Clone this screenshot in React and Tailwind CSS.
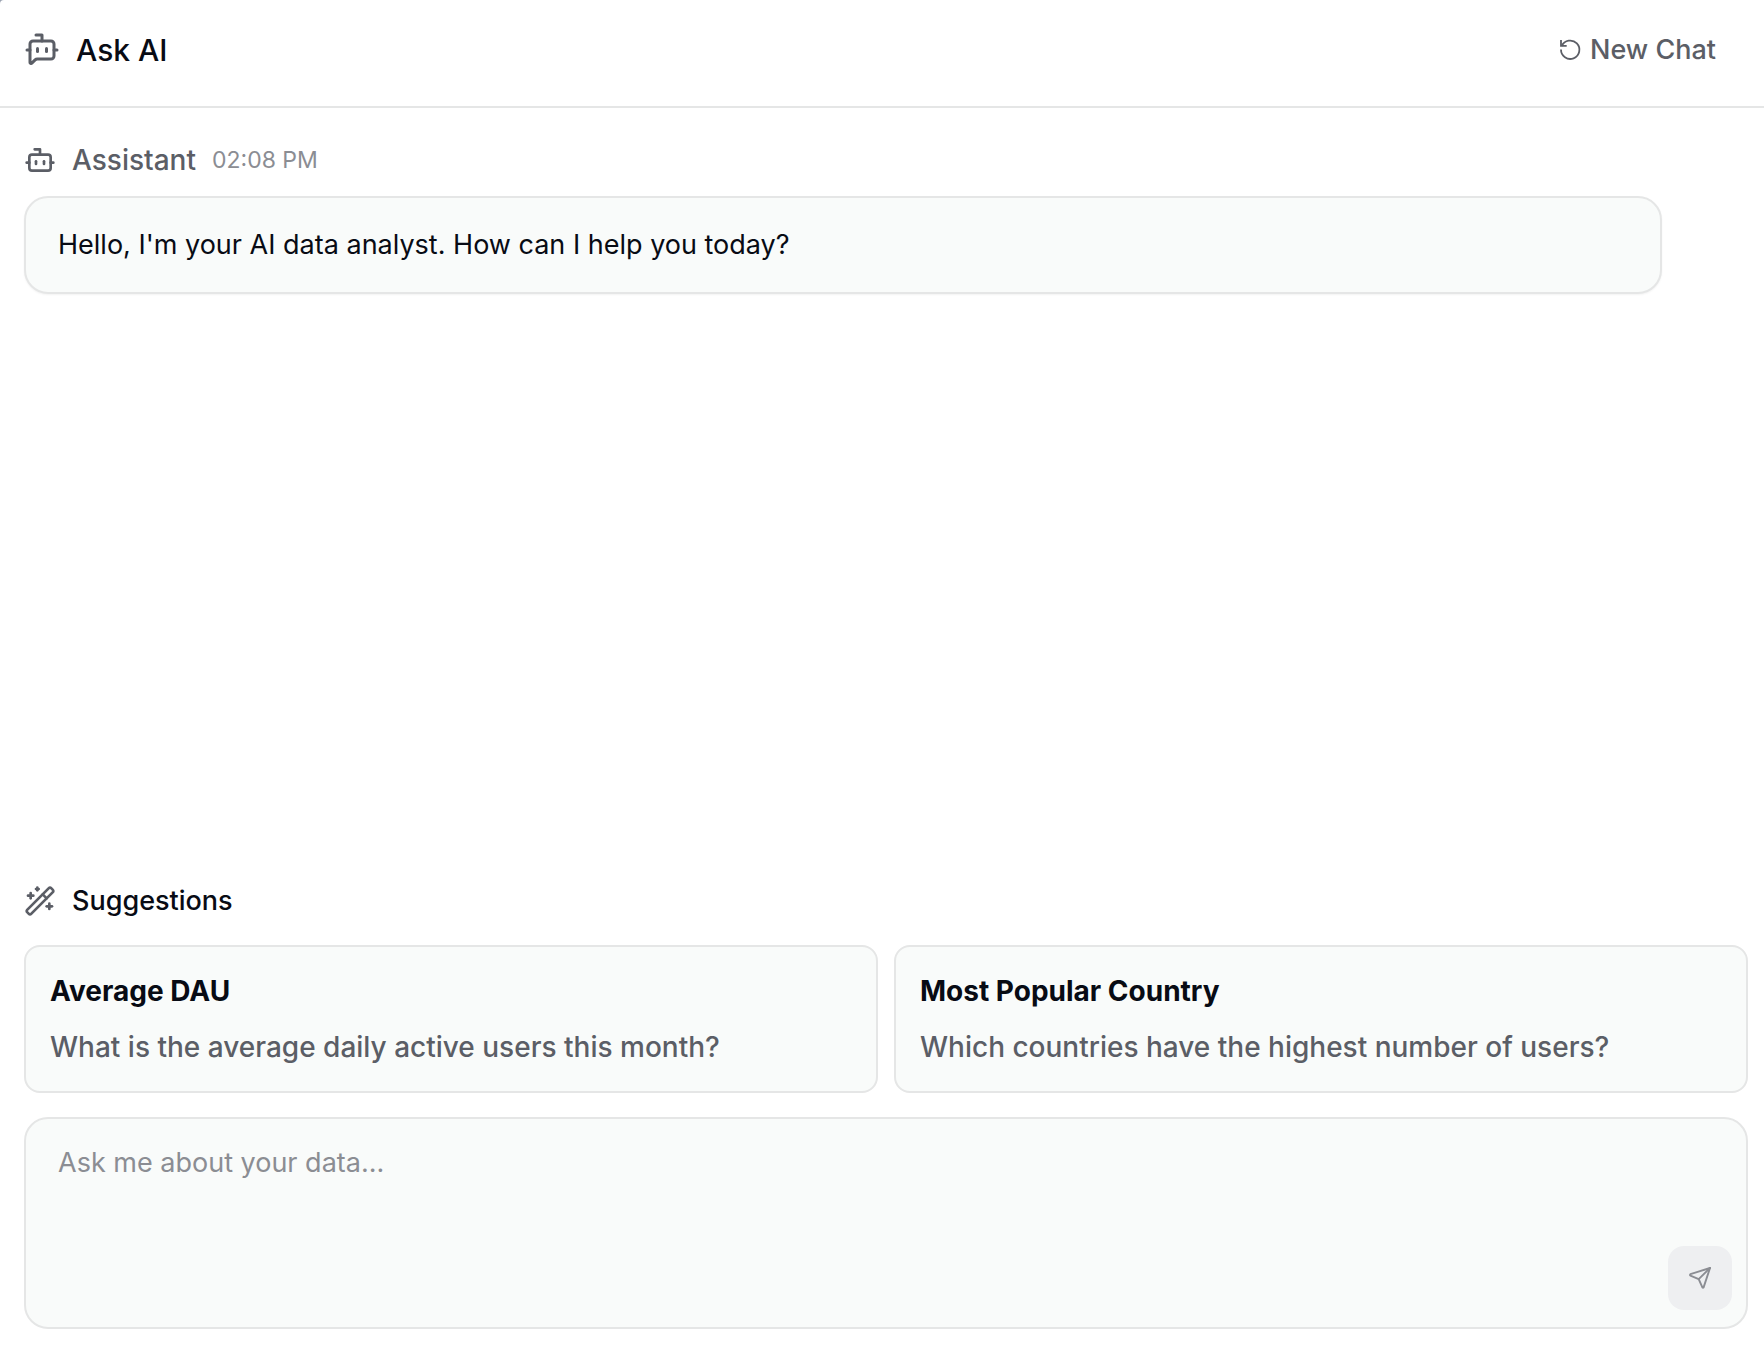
import React from "react";
import { Bot, BotMessageSquare, WandSparkles } from "lucide-react";

const suggestions = [
  { title: "Average DAU", text: "What is the average daily active users this month?" },
  { title: "Most Popular Country", text: "Which countries have the highest number of users?" },
];

function ResetIcon() {
  return (
    <svg className="size-6" viewBox="0 0 24 24" fill="none" stroke="currentColor" strokeWidth="1.8" aria-hidden="true">
      <path d="M3 2v5.8h5.7" />
      <path d="M3.8 8A9.2 9.2 0 1 1 3 11.6" />
    </svg>
  );
}

function PlaneIcon() {
  return (
    <svg className="size-6" viewBox="0 0 24 24" fill="none" stroke="currentColor" strokeWidth="1.9" strokeLinecap="round" strokeLinejoin="round" aria-hidden="true">
      <path d="M22 2 2.4 8.2Q1.6 8.9 2.4 9.6L10.7 13.1 14.4 21.4Q15 22.2 15.6 21.4L22 2Z" />
      <path d="M10.7 13.1 22 2" />
    </svg>
  );
}

export default function App() {
  return (
    <div className="bg-gray-400">
      <div className="flex min-h-screen flex-col rounded-tl-sm bg-white font-['Inter',sans-serif] text-[27px] leading-10 text-[#080b14]">
        <header className="flex items-center justify-between border-b-2 border-[#e5e6e6] px-6 pt-[25px] pb-[31px]">
          <div className="flex items-center gap-4">
            <BotMessageSquare className="size-9 text-[#5b5e66]" />
            <h1 className="text-[30px] leading-[50px] font-medium">Ask AI</h1>
          </div>
          <button type="button" className="flex items-center gap-2 px-6 font-medium text-[#5b5e66]">
            <ResetIcon />
            New Chat
          </button>
        </header>

        <main className="flex flex-1 flex-col pr-4 pb-[21px] pl-6">
          <section className="pt-8" aria-label="Conversation">
            <div className="flex items-center gap-4">
              <Bot className="size-8 text-[#5b5e66]" />
              <span className="text-[28px] font-medium text-[#5b5e66]">Assistant</span>
              <time className="text-[23px] text-[#8b8d93]">02:08 PM</time>
            </div>
            <p className="mt-4 w-[95%] rounded-3xl border-2 border-[#e5e6e6] bg-[#f9fbfa] px-8 py-[27px] shadow-xs">
              Hello, I'm your AI data analyst. How can I help you today?
            </p>
          </section>

          <section className="mt-auto" aria-labelledby="suggestions-title">
            <div className="flex items-center gap-4">
              <WandSparkles className="size-8 text-[#5b5e66]" />
              <h2 id="suggestions-title" className="font-medium">Suggestions</h2>
            </div>
            <div className="mt-6 grid grid-cols-2 gap-4">
              {suggestions.map((item) => (
                <button
                  key={item.title}
                  type="button"
                  className="flex flex-col gap-4 rounded-2xl border-2 border-[#e5e6e6] bg-[#f9fbfa] p-6 text-left text-[28px]"
                >
                  <span className="font-bold">{item.title}</span>
                  <span className="font-medium text-[#5b5e66]">{item.text}</span>
                </button>
              ))}
            </div>
          </section>

          <form className="relative mt-6 flex" onSubmit={(e) => e.preventDefault()}>
            <textarea
              aria-label="Ask me about your data"
              placeholder="Ask me about your data..."
              className="h-[212px] w-full resize-none rounded-3xl border-2 border-[#e5e6e6] bg-[#f9fbfa] px-8 py-6 outline-none placeholder:text-[#8b8d93]"
            />
            <button
              type="submit"
              aria-label="Send"
              className="absolute right-4 bottom-[19px] flex size-16 items-center justify-center rounded-2xl bg-[#eeeff1] text-[#8b8d93]"
            >
              <PlaneIcon />
            </button>
          </form>
        </main>
      </div>
    </div>
  );
}
